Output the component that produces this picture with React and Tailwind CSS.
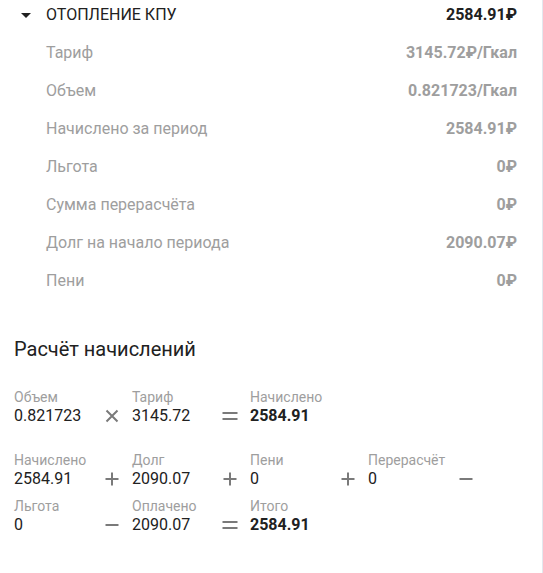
import React from "react";

const rows = [
  ["Тариф", "3145.72₽/Гкал"],
  ["Объем", "0.821723/Гкал"],
  ["Начислено за период", "2584.91₽"],
  ["Льгота", "0₽"],
  ["Сумма перерасчёта", "0₽"],
  ["Долг на начало периода", "2090.07₽"],
  ["Пени", "0₽"],
];

function Op({ type }) {
  return (
    <svg width="16" height="16" viewBox="0 0 16 16" className="shrink-0 mb-[1px]" stroke="#7a7a7a" strokeWidth="2" fill="none">
      {type === "x" && <path d="M2.5 2.5l11 11M13.5 2.5l-11 11" />}
      {type === "+" && <path d="M8 1.5v13M1.5 8h13" />}
      {type === "-" && <path d="M1.5 8h13" />}
      {type === "=" && <path d="M0.5 5h15M0.5 11h15" />}
    </svg>
  );
}

function Term({ label, value, op, bold }) {
  return (
    <div className="flex items-end w-[118px] h-[36px]">
      <div className="w-[90px]">
        <div className="text-[14px] leading-[17px] text-[#9e9e9e]">{label}</div>
        <div className={"text-[16px] leading-[19px] text-[#212121] " + (bold ? "font-bold" : "")}>{value}</div>
      </div>
      {op && <Op type={op} />}
    </div>
  );
}

export default function App() {
  return (
    <div className="min-h-screen w-full bg-white border-r border-[#e3e8ee] font-['Roboto',sans-serif] overflow-hidden">
      <div className="-mt-[4px] pr-[25px]">
        <div className="flex items-center h-[38px]">
          <svg width="10" height="5" viewBox="0 0 10 5" className="ml-[21px] mr-[15px]">
            <path d="M0 0h10L5 5z" fill="#212121" />
          </svg>
          <span className="text-[16px] text-[#212121]">ОТОПЛЕНИЕ КПУ</span>
          <span className="ml-auto text-[16px] font-bold text-[#212121]">2584.91₽</span>
        </div>
        {rows.map(([l, v]) => (
          <div key={l} className="flex items-center h-[38px] pl-[46px]">
            <span className="text-[16px] text-[#9e9e9e]">{l}</span>
            <span className="ml-auto text-[16px] font-bold text-[#9e9e9e]">{v}</span>
          </div>
        ))}
      </div>

      <div className="px-[14px]">
        <h2 className="mt-[35px] text-[20px] leading-[28px] text-[#212121]">Расчёт начислений</h2>

        <div className="flex mt-[26px]">
          <Term label="Объем" value="0.821723" op="x" />
          <Term label="Тариф" value="3145.72" op="=" />
          <Term label="Начислено" value="2584.91" bold />
        </div>

        <div className="flex flex-wrap gap-y-[10px] mt-[27px] w-[500px]">
          <Term label="Начислено" value="2584.91" op="+" />
          <Term label="Долг" value="2090.07" op="+" />
          <Term label="Пени" value="0" op="+" />
          <Term label="Перерасчёт" value="0" op="-" />
          <Term label="Льгота" value="0" op="-" />
          <Term label="Оплачено" value="2090.07" op="=" />
          <Term label="Итого" value="2584.91" bold />
        </div>
      </div>
    </div>
  );
}
